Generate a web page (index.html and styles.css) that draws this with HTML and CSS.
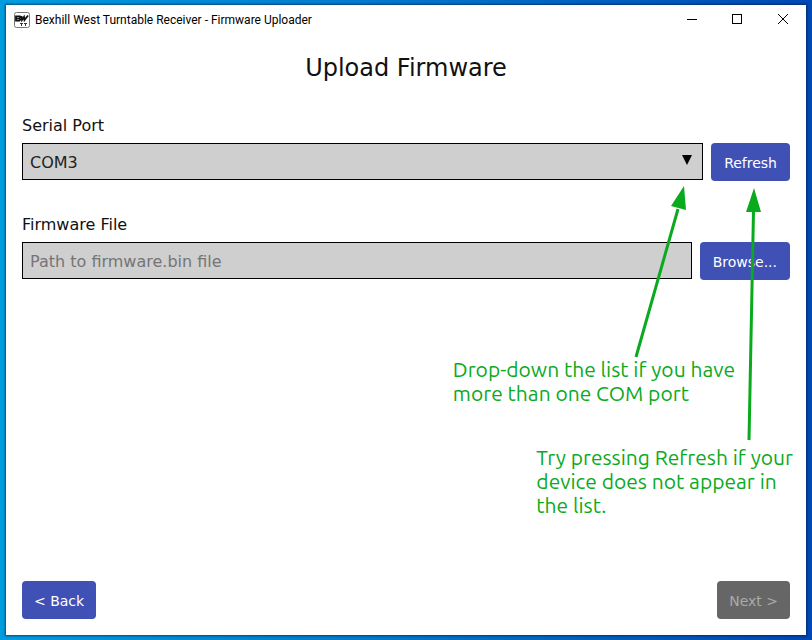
FILE: index.html
```
<!DOCTYPE html>
<html lang="en">
<head>
    <meta charset="UTF-8">
    <meta name="viewport" content="width=device-width, initial-scale=1.0">
    <title>Bexhill West Turntable Receiver - Firmware Uploader</title>
    <link rel="stylesheet" href="styles.css">
</head>
<body>
    <div class="window">
        <header class="titlebar">
            <svg class="app-icon" viewBox="0 0 16 16" aria-hidden="true">
                <rect x="0.5" y="0.5" width="15" height="15" rx="2" fill="#fff" stroke="#777"/>
                <path d="M2 4.500h4l.5 1-.8 1 .6 1-.8 1H2zM7.500 4l.5 4 2-3 .5 3L14 3.500" fill="none" stroke="#111" stroke-width="1.800"/>
                <path d="M2 6.500h4" stroke="#111"/>
                <path d="M6 11.500h3M7.500 11v3M10 11.500h3M11.500 11v3" stroke="#333" fill="none"/>
            </svg>
            <span class="titlebar-text">Bexhill West Turntable Receiver - Firmware Uploader</span>
            <div class="window-controls">
                <button type="button" aria-label="Minimize">
                    <svg viewBox="0 0 12 12"><path d="M2 5.5h10"/></svg>
                </button>
                <button type="button" aria-label="Maximize">
                    <svg viewBox="0 0 12 12"><rect x="1.5" y="0.5" width="9" height="9"/></svg>
                </button>
                <button type="button" aria-label="Close">
                    <svg viewBox="0 0 12 12"><path d="M1 0l10 10M11 0L1 10"/></svg>
                </button>
            </div>
        </header>

        <main class="content">
            <h1>Upload Firmware</h1>

            <div class="field">
                <label for="serialPort">Serial Port</label>
                <div class="field-row">
                    <div class="select-wrap">
                        <select id="serialPort">
                            <option>COM3</option>
                        </select>
                    </div>
                    <button type="button" class="btn">Refresh</button>
                </div>
            </div>

            <div class="field">
                <label for="firmwareFile">Firmware File</label>
                <div class="field-row">
                    <input type="text" id="firmwareFile" placeholder="Path to firmware.bin file">
                    <button type="button" class="btn">Browse...</button>
                </div>
            </div>

            <div class="nav-buttons">
                <button type="button" class="btn">&lt; Back</button>
                <button type="button" class="btn" disabled>Next &gt;</button>
            </div>
        </main>

        <!-- Help notes and arrows on top of the form -->
        <svg class="arrows" viewBox="0 0 140 260" aria-hidden="true">
            <path d="M16 172L58 24M129 255L133.500 26" stroke="#0aaa1e" stroke-width="3" fill="none"/>
            <path d="M64 1L51 21L66 25zM134 3L126 27H141z" fill="#0aaa1e"/>
        </svg>
        <p class="note note-ports">Drop-down the list if you have<br>more than one COM port</p>
        <p class="note note-refresh">Try pressing Refresh if your<br>device does not appear in<br>the list.</p>
    </div>
</body>
</html>
```
FILE: styles.css
```
* {
    box-sizing: border-box;
}
body {
    margin: 0;
    padding: 5px 6px;
    min-height: 100vh;
    display: flex;
    background: linear-gradient(90deg, #009ddf 0%, #0080d0 40%, #0048b4 100%);
    font-family: Verdana, "DejaVu Sans", sans-serif;
    color: #111;
}
.window {
    position: relative;
    flex: 1;
    display: flex;
    flex-direction: column;
    background-color: #fff;
    box-shadow: 0 0 2px 1px rgba(0, 20, 60, 0.6);
}
.titlebar {
    display: flex;
    align-items: center;
    height: 30px;
    padding-left: 8px;
}
.app-icon {
    width: 16px;
    height: 16px;
    margin-right: 5px;
}
.titlebar-text {
    font-family: "Segoe UI", Roboto, sans-serif;
    font-size: 12px;
    color: #000;
}
.window-controls {
    display: flex;
    margin-left: auto;
}
.window-controls button {
    width: 46px;
    height: 30px;
    padding: 0;
    border: none;
    background: none;
}
.window-controls svg {
    display: block;
    width: 12px;
    height: 12px;
    margin: 0 auto;
    fill: none;
    stroke: #000;
}
.content {
    flex: 1;
    display: flex;
    flex-direction: column;
    padding: 16px;
}
h1 {
    margin: 0 0 31px;
    font-size: 24px;
    line-height: 34px;
    font-weight: normal;
    text-align: center;
}
.field {
    margin-bottom: 34px;
}
.field label {
    display: block;
    margin-bottom: 7px;
    font-size: 16px;
    line-height: 20px;
}
.field-row {
    display: flex;
    gap: 8px;
}
.select-wrap {
    position: relative;
    flex: 1;
}
.select-wrap::after {
    content: "";
    position: absolute;
    top: 12px;
    right: 11px;
    border: 5px solid transparent;
    border-top: 10px solid #000;
    border-bottom: none;
    pointer-events: none;
}
select,
input {
    display: block;
    width: 100%;
    height: 37px;
    padding: 2px 7px 0;
    border: 1px solid #000;
    border-radius: 0;
    background-color: #cfcfcf;
    color: #222;
    font-family: inherit;
    font-size: 16px;
    appearance: none;
}
input {
    flex: 1;
}
input::placeholder {
    color: #757575;
}
.btn {
    height: 38px;
    padding: 2px 12px 0;
    border: none;
    border-radius: 4px;
    background-color: #3f51b5;
    color: #fff;
    font-family: inherit;
    font-size: 14px;
    white-space: nowrap;
}
.field .btn {
    padding: 2px 13px 0;
}
.btn:disabled {
    background-color: #666;
    color: #aaa;
}
.nav-buttons {
    display: flex;
    justify-content: space-between;
    margin-top: auto;
}
.arrows {
    position: absolute;
    top: 180px;
    right: 46px;
    width: 140px;
    height: 260px;
    overflow: visible;
    pointer-events: none;
}
.note {
    position: absolute;
    margin: 0;
    font-family: Ubuntu, "Noto Sans", sans-serif;
    font-size: 21px;
    line-height: 24px;
    color: #0aaa1e;
    white-space: nowrap;
}
.note-ports {
    top: 352px;
    right: 71px;
}
.note-refresh {
    top: 440px;
    right: 13px;
}
```
